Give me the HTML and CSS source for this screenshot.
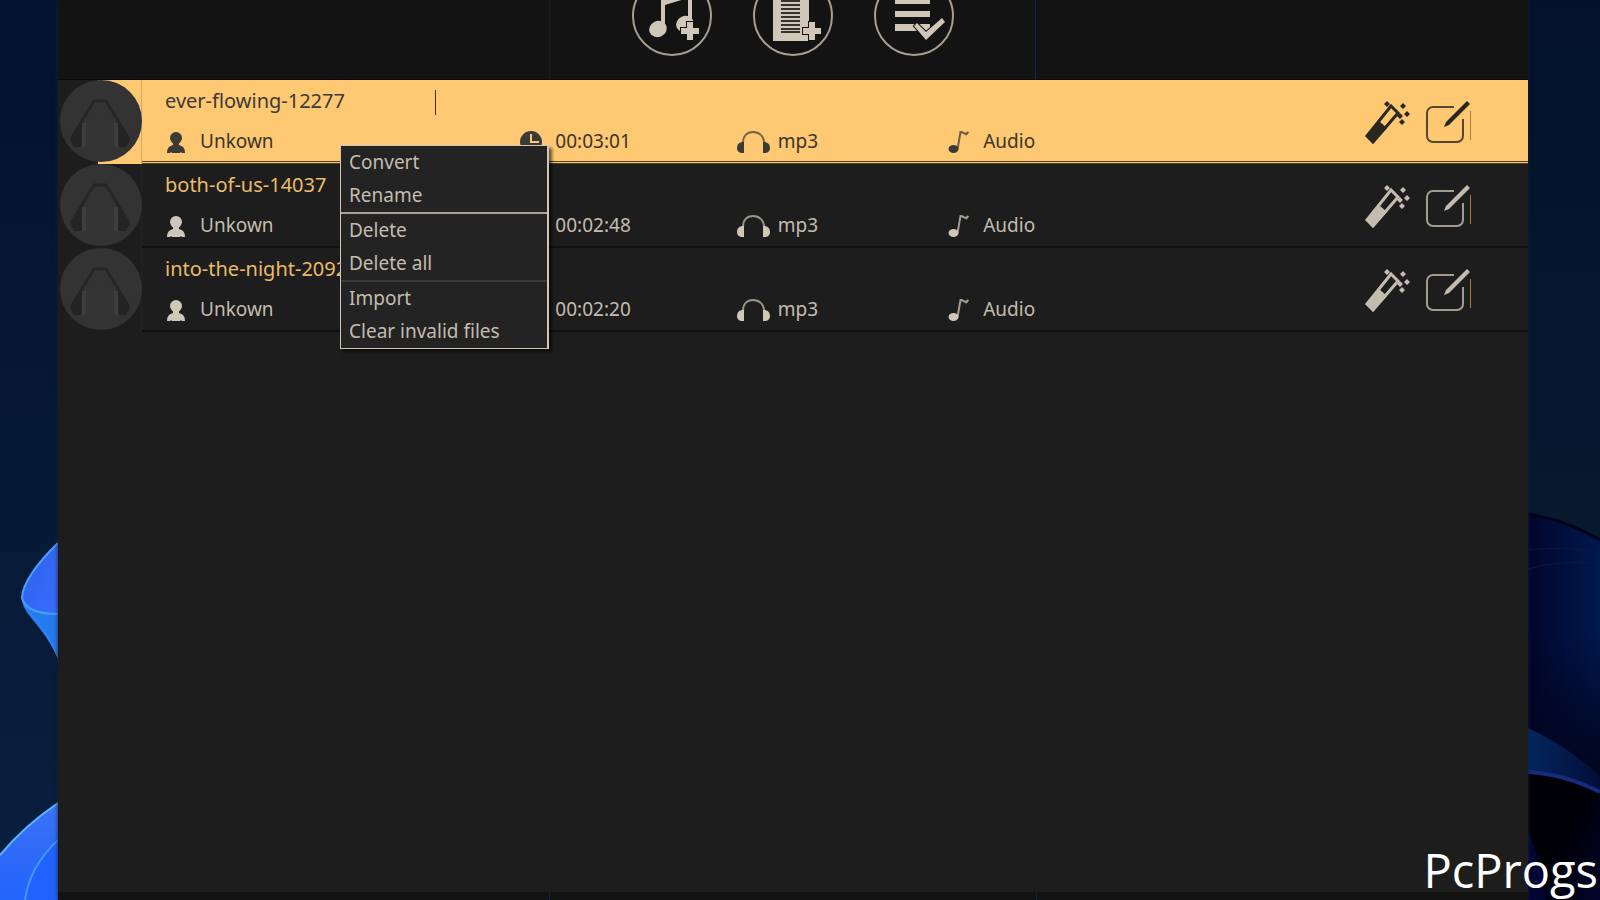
FILE: index.html
```html
<!DOCTYPE html>
<html lang="en">

<head>
  <meta charset="UTF-8">
  <title>Audio Converter</title>
  <link rel="stylesheet" href="styles.css">
</head>

<body>

  <!-- Shared icons -->
  <svg class="sprites" aria-hidden="true">
    <symbol id="icon-cover" viewBox="0 0 84 84">
      <circle cx="43" cy="41" r="41" fill="#333333"/>
      <path d="M13 59L36 21h12l23 38" fill="none" stroke="#262626" stroke-width="3"/>
      <path d="M14 56l-2 4 4 7h9V42zM70 56l2 4-4 7h-9V42z" fill="#242424"/>
      <path d="M26 43v24M58 43v24" stroke="#3d3d3d" stroke-width="4"/>
    </symbol>
    <symbol id="icon-person" viewBox="0 0 20 22">
      <circle cx="10" cy="7" r="6"/>
      <path d="M7 10h6v4q6 1 6 8h-3l-1-1-1 1H6l-1-1-1 1H1q0-7 6-8z"/>
    </symbol>
    <symbol id="icon-clock" viewBox="0 0 22 22">
      <path fill-rule="evenodd" d="M11 0a11 11 0 1 0 0 22a11 11 0 0 0 0-22zM10 3h2v7h7v2h-9z"/>
    </symbol>
    <symbol id="icon-phones" viewBox="0 0 33 22">
      <path d="M6 12C6 5 10 1 16 1s11 4 11 11" fill="none" stroke="currentColor" stroke-width="2" opacity=".7"/>
      <path d="M7 11v11H4q-4-1-4-5 0-5 5-6zM26 11v11h3q4-1 4-5 0-5-5-6z"/>
    </symbol>
    <symbol id="icon-note" viewBox="0 0 21 22">
      <ellipse cx="5" cy="18" rx="5" ry="4"/>
      <path d="M9 18L12 1q2 0 3 1 2 2 5-1M17 4l2-2" fill="none" stroke="currentColor" stroke-width="2" opacity=".75"/>
    </symbol>
    <symbol id="icon-wand" viewBox="0 0 48 48">
      <path d="M3 39l6 6 25-29-7-7z" fill="none" stroke="currentColor" stroke-width="3"/>
      <path d="M2 39L15 24l8 7L9 46z"/>
      <path d="M23 4l3 3-3 3-3-3zM39 6l3 3-3 3-3-3zM43 14l3 3-3 3-3-3zM36 16l3 3-3 3-3-3zM38 22l3 3-3 3-3-3z"/>
    </symbol>
    <symbol id="icon-edit" viewBox="0 0 48 48">
      <path d="M30 10H9a6 6 0 0 0-6 6v23a6 6 0 0 0 6 6h24a6 6 0 0 0 6-6V22" fill="none" stroke="currentColor" stroke-width="2" opacity=".8"/>
      <path d="M43 4l3 3-21 21-5 2 2-5z"/>
      <path class="edge" d="M46 14h1v29h-1z"/>
    </symbol>
  </svg>

  <!-- Desktop left of the window -->
  <svg class="desktop" viewBox="0 0 58 900" preserveAspectRatio="none" aria-hidden="true">
    <defs>
      <linearGradient id="leftSky" x1="0" y1="0" x2="0" y2="1">
        <stop offset="0" stop-color="#03122e"/>
        <stop offset=".5" stop-color="#061935"/>
        <stop offset="1" stop-color="#0a1e40"/>
      </linearGradient>
      <linearGradient id="petalTop" x1="0" y1="0" x2="1" y2="1">
        <stop offset="0" stop-color="#2b62e6"/>
        <stop offset="1" stop-color="#3a6cff"/>
      </linearGradient>
      <linearGradient id="petalLow" x1="0" y1="0" x2="0" y2="1">
        <stop offset="0" stop-color="#3c72f4"/>
        <stop offset="1" stop-color="#2364fb"/>
      </linearGradient>
    </defs>
    <rect width="58" height="900" fill="url(#leftSky)"/>
    <path d="M58 543C38 562 22 584 22 600C24 616 42 624 58 658z" fill="#267af0"/>
    <path d="M58 543C38 562 22 584 22 600Q28 614 58 614z" fill="url(#petalTop)"/>
    <path d="M58 543C38 562 22 584 22 598Q26 614 58 614" fill="none" stroke="#45a2fb" stroke-width="2"/>
    <path d="M24 606C34 618 44 626 58 658" fill="none" stroke="#2e8ff0"/>
    <path d="M58 803Q24 826 0 855V900H58z" fill="url(#petalLow)"/>
    <path d="M58 840Q30 866 25 900H58z" fill="#2162ff"/>
    <path d="M58 803Q24 826 0 855" fill="none" stroke="#55b8ff" stroke-width="2"/>
    <path d="M58 840Q30 866 25 900" fill="none" stroke="#4497fb" stroke-width="2"/>
  </svg>

  <main class="window">
    <header class="toolbar">
      <div class="toolbar-side"></div>
      <div class="toolbar-main">
        <button type="button" class="round-btn" aria-label="Add music">
          <svg viewBox="0 0 80 80">
            <circle cx="40" cy="40" r="39" fill="none" stroke="#a89f92" stroke-width="2"/>
            <ellipse cx="26" cy="53" rx="9" ry="8" transform="rotate(-25 26 53)"/>
            <ellipse cx="53" cy="48" rx="9" ry="8" transform="rotate(-25 53 48)"/>
            <path d="M29 18l31-7v37h-4V22l-23 7v24h-4z"/>
            <path class="mark" d="M55 46h6v6h6v6h-6v6h-6v-6h-6v-6h6z"/>
          </svg>
        </button>
        <button type="button" class="round-btn" aria-label="Add folder">
          <svg viewBox="0 0 80 80">
            <circle cx="40" cy="40" r="39" fill="none" stroke="#a89f92" stroke-width="2"/>
            <path d="M20 12h36v53H20z"/>
            <path d="M28 25h19M28 29h19M28 33h19M28 37h19M28 41h19M28 45h19M28 49h19M28 53h19M28 56h19" stroke="#35322e" stroke-width="2"/>
            <path class="mark" d="M56 46h6v6h6v6h-6v6h-6v-6h-6v-6h6z"/>
          </svg>
        </button>
        <button type="button" class="round-btn" aria-label="Select all">
          <svg viewBox="0 0 80 80">
            <circle cx="40" cy="40" r="39" fill="none" stroke="#a89f92" stroke-width="2"/>
            <path d="M21 21h35v7H21zM21 35h35v6H21zM21 48h35v7H21z"/>
            <path class="mark" d="M43 47l9 9 16-14 3 4-19 18-12-14z"/>
          </svg>
        </button>
      </div>
      <div class="toolbar-side"></div>
    </header>

    <ul class="tracks">
      <li class="track selected">
        <div class="cover"><svg><use href="#icon-cover"/></svg></div>
        <div class="info">
          <div class="name">ever-flowing-12277</div>
          <div class="meta">
            <span class="cell"><svg class="icon"><use href="#icon-person"/></svg>Unkown</span>
            <span class="cell"><svg class="icon"><use href="#icon-clock"/></svg>00:03:01</span>
            <span class="cell"><svg class="icon wide"><use href="#icon-phones"/></svg>mp3</span>
            <span class="cell"><svg class="icon"><use href="#icon-note"/></svg>Audio</span>
          </div>
        </div>
        <div class="actions">
          <button type="button" aria-label="Effects"><svg><use href="#icon-wand"/></svg></button>
          <button type="button" aria-label="Edit"><svg><use href="#icon-edit"/></svg></button>
        </div>
      </li>
      <li class="track">
        <div class="cover"><svg><use href="#icon-cover"/></svg></div>
        <div class="info">
          <div class="name">both-of-us-14037</div>
          <div class="meta">
            <span class="cell"><svg class="icon"><use href="#icon-person"/></svg>Unkown</span>
            <span class="cell"><svg class="icon"><use href="#icon-clock"/></svg>00:02:48</span>
            <span class="cell"><svg class="icon wide"><use href="#icon-phones"/></svg>mp3</span>
            <span class="cell"><svg class="icon"><use href="#icon-note"/></svg>Audio</span>
          </div>
        </div>
        <div class="actions">
          <button type="button" aria-label="Effects"><svg><use href="#icon-wand"/></svg></button>
          <button type="button" aria-label="Edit"><svg><use href="#icon-edit"/></svg></button>
        </div>
      </li>
      <li class="track">
        <div class="cover"><svg><use href="#icon-cover"/></svg></div>
        <div class="info">
          <div class="name">into-the-night-2092</div>
          <div class="meta">
            <span class="cell"><svg class="icon"><use href="#icon-person"/></svg>Unkown</span>
            <span class="cell"><svg class="icon"><use href="#icon-clock"/></svg>00:02:20</span>
            <span class="cell"><svg class="icon wide"><use href="#icon-phones"/></svg>mp3</span>
            <span class="cell"><svg class="icon"><use href="#icon-note"/></svg>Audio</span>
          </div>
        </div>
        <div class="actions">
          <button type="button" aria-label="Effects"><svg><use href="#icon-wand"/></svg></button>
          <button type="button" aria-label="Edit"><svg><use href="#icon-edit"/></svg></button>
        </div>
      </li>
    </ul>

    <footer class="bottom-bar">
      <div></div>
      <div></div>
      <div></div>
    </footer>

    <span class="text-cursor"></span>

    <div class="context-menu" role="menu">
      <button type="button" role="menuitem">Convert</button>
      <button type="button" role="menuitem">Rename</button>
      <hr class="bright">
      <button type="button" role="menuitem">Delete</button>
      <button type="button" role="menuitem">Delete all</button>
      <hr>
      <button type="button" role="menuitem">Import</button>
      <button type="button" role="menuitem">Clear invalid files</button>
    </div>
  </main>

  <!-- Desktop right of the window -->
  <svg class="desktop" viewBox="0 0 72 900" preserveAspectRatio="none" aria-hidden="true">
    <defs>
      <linearGradient id="rightSky" x1="0" y1="0" x2="0" y2="1">
        <stop offset="0" stop-color="#03112c"/>
        <stop offset=".55" stop-color="#06192f"/>
      </linearGradient>
      <linearGradient id="darkPetal" x1="0" y1="0" x2="1" y2="0">
        <stop offset="0" stop-color="#01062c"/>
        <stop offset="1" stop-color="#00184c"/>
      </linearGradient>
      <linearGradient id="shade" x1="0" y1="0" x2="0" y2="1">
        <stop offset=".45" stop-color="#00041c" stop-opacity="0"/>
        <stop offset="1" stop-color="#00041c"/>
      </linearGradient>
      <linearGradient id="rim" x1="0" y1="0" x2="1" y2="0">
        <stop offset="0" stop-color="#05265e"/>
        <stop offset="1" stop-color="#020d38"/>
      </linearGradient>
      <linearGradient id="deep" x1="0" y1="0" x2="1" y2="1">
        <stop offset="0" stop-color="#000006"/>
        <stop offset=".5" stop-color="#000008"/>
        <stop offset="1" stop-color="#010428"/>
      </linearGradient>
    </defs>
    <rect width="72" height="900" fill="url(#rightSky)"/>
    <path d="M0 514Q38 520 72 540V900H0z" fill="url(#darkPetal)"/>
    <path d="M0 514Q38 520 72 540V780L0 728z" fill="url(#shade)"/>
    <path d="M0 514Q38 520 72 540" fill="none" stroke="#01031c" stroke-width="3"/>
    <path d="M0 550Q40 545 72 553M0 569Q30 560 72 563" fill="none" stroke="#0c1747"/>
    <path d="M0 728Q38 745 72 776V792Q36 774 0 772z" fill="url(#rim)"/>
    <path d="M0 772Q36 774 72 792V900H0z" fill="url(#deep)"/>
    <path d="M0 832Q10 850 18 900H0z" fill="#010634"/>
    <path d="M0 772Q36 774 72 792" fill="none" stroke="#152b7d" stroke-width="4"/>
  </svg>

  <div class="watermark">PcProgs</div>

</body>

</html>
```
FILE: styles.css
```css
* {
  box-sizing: border-box;
}

body {
  margin: 0;
  min-height: 100vh;
  display: grid;
  grid-template-columns: 58px 1fr 72px;
  position: relative;
  overflow: hidden;
  background: #03122c;
  color: #c4bcae;
  font-family: "Noto Sans", "Open Sans", sans-serif;
  font-size: 19px;
}

button {
  padding: 0;
  border: none;
  background: none;
  color: inherit;
  font: inherit;
  cursor: pointer;
}

svg {
  display: block;
  fill: currentColor;
}

.sprites {
  position: absolute;
  width: 0;
  height: 0;
}

.desktop {
  width: 100%;
  height: 100%;
}

.window {
  position: relative;
  display: flex;
  flex-direction: column;
  background: #1d1d1d;
  box-shadow: 0 0 4px #1a2230;
}

/* Toolbar */
.toolbar,
.bottom-bar {
  display: grid;
  grid-template-columns: 491fr 487fr 492fr;
  background: #131313;
}

/* the round buttons run off the top edge */
.toolbar {
  grid-template-rows: 80px;
  border-bottom: 1px solid #0a0a0a;
  height: 80px;
}

.toolbar-main {
  display: flex;
  justify-content: center;
  align-items: flex-end;
  gap: 41px;
  padding-bottom: 24px;
  border-left: 1px solid #161a22;
  border-right: 1px solid #12234a;
}

.round-btn {
  width: 80px;
  height: 80px;
  color: #d0c7b8;
}

.mark {
  stroke: #131313;
  stroke-width: 2;
  paint-order: stroke;
}

/* Track list */
.tracks {
  flex: 1;
  margin: 0;
  padding: 0;
  list-style: none;
}

.track {
  display: flex;
  height: 84px;
}

.cover {
  width: 84px;
  background: #1d1d1d;
  border-right: 1px solid #222222;
}

.cover svg {
  width: 84px;
  height: 84px;
}

.info {
  flex: 1;
  padding: 1px 0 0 23px;
  border-bottom: 2px solid #111111;
}

.name {
  color: #eabb68;
  font-size: 20px;
  line-height: 40px;
}

.meta {
  display: grid;
  grid-template-columns: 353fr 215fr 210fr 413fr;
  line-height: 41px;
}

.cell {
  display: flex;
  align-items: center;
}

.icon {
  width: 22px;
  height: 22px;
  margin-right: 13px;
  color: #d0c7b8;
}

.icon.wide {
  width: 33px;
  margin-right: 8px;
}

.actions {
  display: flex;
  align-items: center;
  gap: 12px;
  padding-right: 56px;
  border-bottom: 2px solid #111111;
  color: #c4bcae;
}

.actions svg {
  width: 48px;
  height: 48px;
}

.edge {
  fill: #a87c38;
}

.selected {
  color: #3b352b;
}

.selected .cover {
  background: linear-gradient(to right, transparent 40px, #fec972 40px);
  border-right-color: #d3a863;
}

.selected .info,
.selected .actions {
  background: #fec972;
  border-bottom: 3px double #4f3f26;
}

.selected .name,
.selected .icon {
  color: #3b3a36;
}

.selected .actions {
  color: #2a2721;
}

.selected .edge {
  fill: #a98c5f;
}

.bottom-bar {
  height: 8px;
}

.bottom-bar div + div {
  border-left: 1px solid #12234a;
}

/* Items over the list */
.text-cursor {
  position: absolute;
  top: 90px;
  left: 377px;
  width: 1px;
  height: 25px;
  background: #333333;
}

.context-menu {
  position: absolute;
  top: 145px;
  left: 282px;
  width: 209px;
  background: #232323;
  border: 1px solid #cfc6b8;
  border-right-width: 2px;
  box-shadow: 3px 3px 3px rgba(0, 0, 0, 0.6);
}

.context-menu button {
  display: block;
  width: 100%;
  height: 33px;
  padding-left: 8px;
  line-height: 33px;
  text-align: left;
}

.context-menu hr {
  height: 2px;
  margin: 0;
  border: none;
  background: #3a3a3a;
}

.context-menu hr.bright {
  background: #a9a196;
}

.watermark {
  position: absolute;
  right: 2px;
  bottom: 0;
  color: #ffffff;
  font-family: "Open Sans", sans-serif;
  font-size: 47px;
  line-height: 60px;
}
```
